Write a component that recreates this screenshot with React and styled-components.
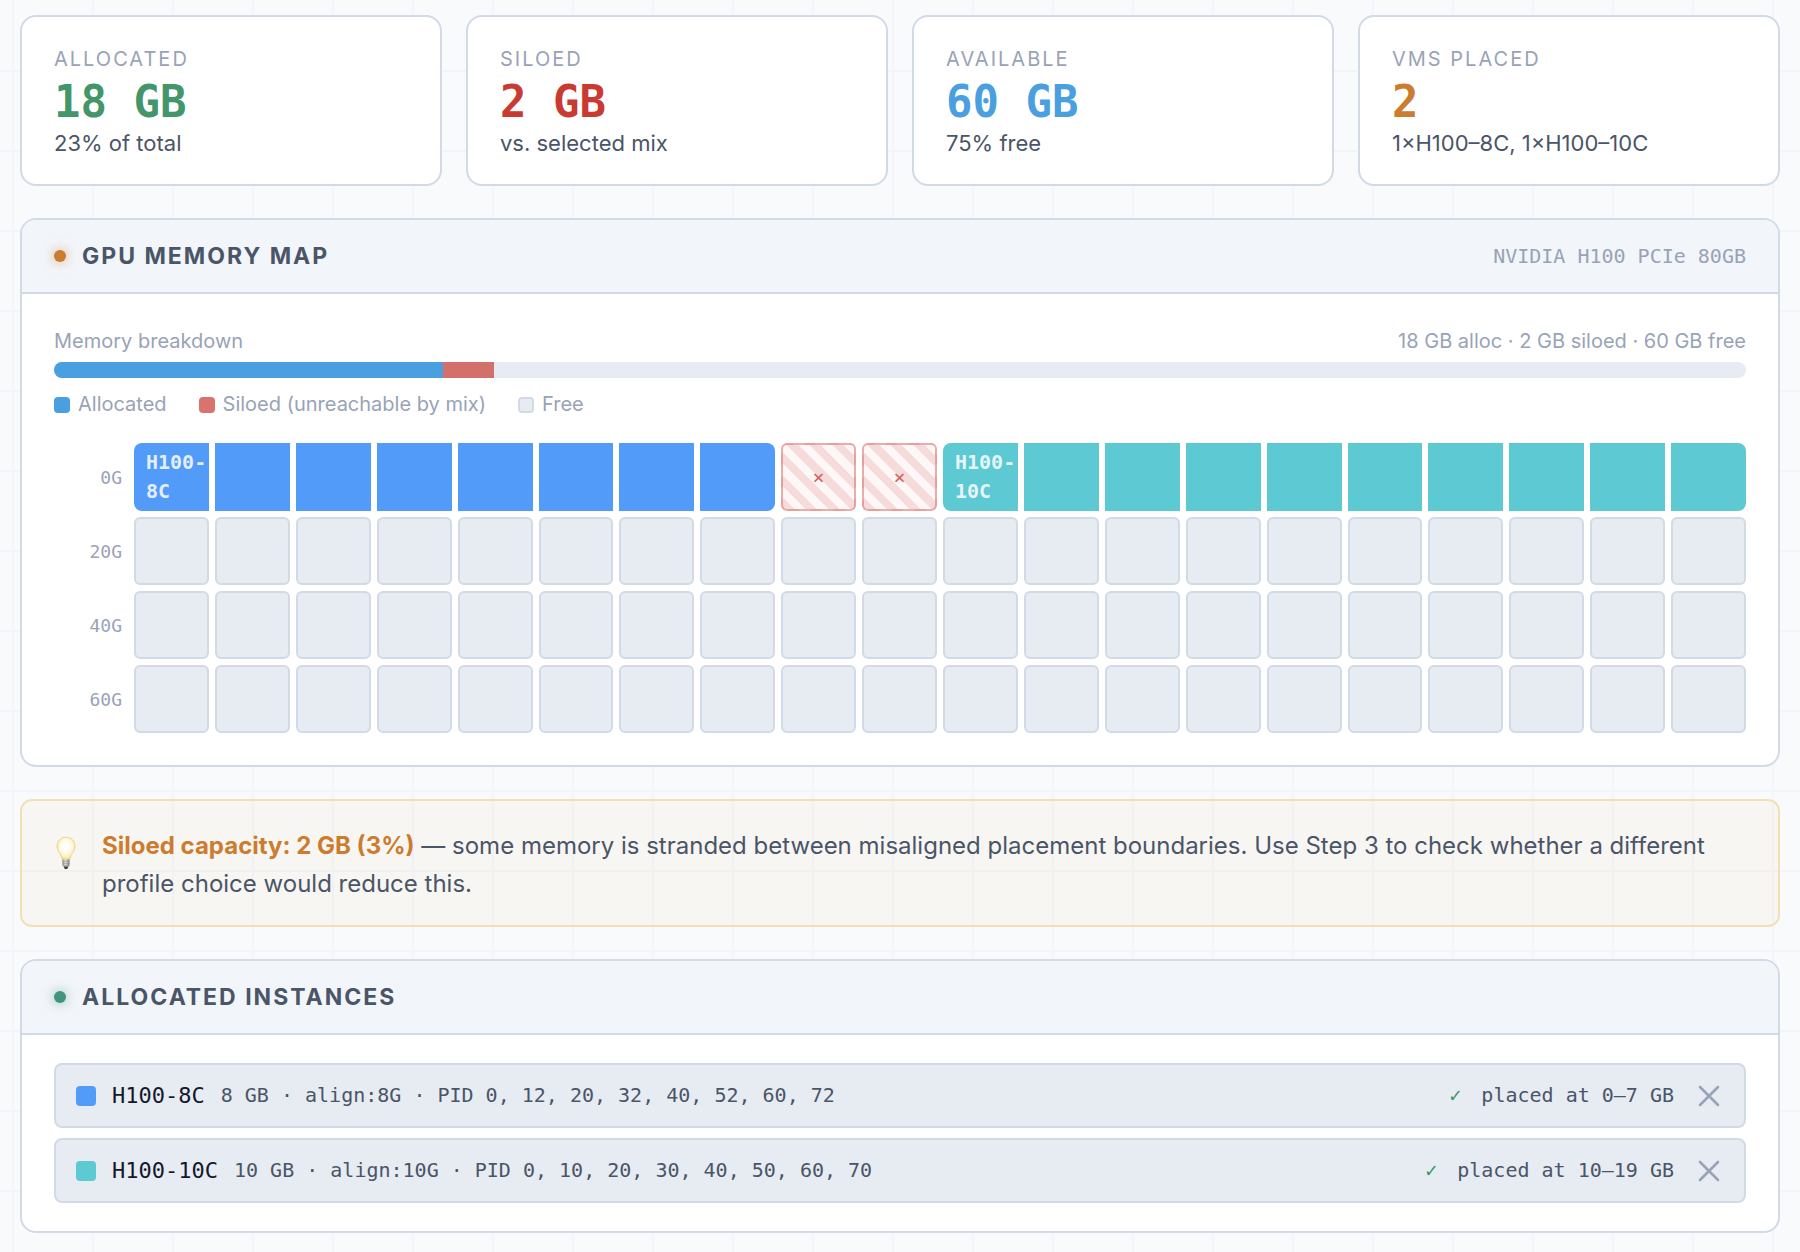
import styled, { createGlobalStyle } from "styled-components"

const sans = `Inter, "Open Sans", "Liberation Sans", sans-serif`
const mono = `"DejaVu Sans Mono", "Liberation Mono", monospace`

const stats = [
    { label: 'Allocated', value: '18 GB', note: '23% of total', color: '#43966a' },
    { label: 'Siloed', value: '2 GB', note: 'vs. selected mix', color: '#c93a32' },
    { label: 'Available', value: '60 GB', note: '75% free', color: '#4a9fe0' },
    { label: 'VMs placed', value: '2', note: '1×H100–8C, 1×H100–10C', color: '#cb7c2e' },
]

const instances = [
    {
        name: 'H100-8C',
        details: '8 GB · align:8G · PID 0, 12, 20, 32, 40, 52, 60, 72',
        placed: 'placed at 0–7 GB',
        color: '#539bf8',
        start: 0,
        size: 8,
    },
    {
        name: 'H100-10C',
        details: '10 GB · align:10G · PID 0, 10, 20, 30, 40, 50, 60, 70',
        placed: 'placed at 10–19 GB',
        color: '#5dc9d3',
        start: 10,
        size: 10,
    },
]

const siloed = [8, 9]
const columns = 20
const rows = [0, 20, 40, 60]
const cellIndexes = Array.from({ length: columns }, (_, i) => i)

const MemoryCell = ({ gb }) => {
    const vm = instances.find((item) => gb >= item.start && gb < item.start + item.size)

    if (vm) {
        const first = gb === vm.start
        const last = gb === vm.start + vm.size - 1
        return (
            <UsedCell $color={vm.color} $first={first} $last={last}>
                {first && <CellName>{vm.name}</CellName>}
            </UsedCell>
        )
    }

    if (siloed.includes(gb)) {
        return <SiloedCell>×</SiloedCell>
    }

    return <FreeCell/>
}

const Bulb = () => (
    <BulbIcon viewBox="0 0 24 34" aria-hidden="true">
        <defs>
            <radialGradient id="glass" cx="50%" cy="42%" r="58%">
                <stop offset="0" stopColor="#ffffff"/>
                <stop offset="0.45" stopColor="#fffdf0"/>
                <stop offset="0.8" stopColor="#fbefb8"/>
                <stop offset="1" stopColor="#ecd37c"/>
            </radialGradient>
            <linearGradient id="metal" x1="0" x2="1" y1="0" y2="0">
                <stop offset="0" stopColor="#8b8986"/>
                <stop offset="0.4" stopColor="#e6e4e2"/>
                <stop offset="1" stopColor="#858380"/>
            </linearGradient>
        </defs>
        <path d="M12 1.2C6.8 1.2 3 5 3 10.2c0 4.2 2.6 6.3 4 9.4.8 1.7 1 3.2 1.4 4.2h7.2c.4-1 .6-2.5 1.400-4.2 1.4-3.100 4-5.200 4-9.400 0-5.200-3.800-9-9-9z" fill="url(#glass)" stroke="#e6cd7d" strokeWidth="0.8"/>
        <path d="M8.4 23.4h7.2v5.4c0 1-1 1.8-2 2.2h-3.2c-1-.4-2-1.2-2-2.2z" fill="url(#metal)"/>
        <path d="M8.4 25.600l7.200-.6M8.400 27.800l7.200-.6M9 29.800l6-.5" stroke="#8f8c88" strokeWidth="0.6"/>
        <path d="M9.6 30.4h4.8L13.2 33h-2.4z" fill="#3b3a39"/>
    </BulbIcon>
)

const App = () => {

    return (
        <Page>
            <GlobalStyle/>
            <StatGrid>
                {stats.map((stat) => (
                    <StatCard key={stat.label}>
                        <StatLabel>{stat.label}</StatLabel>
                        <StatValue $color={stat.color}>{stat.value}</StatValue>
                        <StatNote>{stat.note}</StatNote>
                    </StatCard>
                ))}
            </StatGrid>

            <Panel>
                <PanelHeader>
                    <StatusDot $color="#cb7c2e"/>
                    <PanelTitle>GPU Memory Map</PanelTitle>
                    <PanelMeta>NVIDIA H100 PCIe 80GB</PanelMeta>
                </PanelHeader>
                <MapBody>
                    <BreakdownHead>
                        <span>Memory breakdown</span>
                        <span>18 GB alloc · 2 GB siloed · 60 GB free</span>
                    </BreakdownHead>
                    <Bar>
                        <BarPart $color="#4a9fe0" $width={23}/>
                        <BarPart $color="#d4706b" $width={3}/>
                    </Bar>
                    <Legend>
                        <LegendItem><LegendSwatch $color="#4a9fe0"/>Allocated</LegendItem>
                        <LegendItem><LegendSwatch $color="#d9736e"/>Siloed (unreachable by mix)</LegendItem>
                        <LegendItem><LegendSwatch $color="#e7ecf3" $outlined/>Free</LegendItem>
                    </Legend>
                    <MemoryMap>
                        {rows.map((offset) => (
                            <MemoryRow key={offset}>
                                <RowLabel>{offset}G</RowLabel>
                                <Cells>
                                    {cellIndexes.map((i) => <MemoryCell key={i} gb={offset + i}/>)}
                                </Cells>
                            </MemoryRow>
                        ))}
                    </MemoryMap>
                </MapBody>
            </Panel>

            <Notice>
                <Bulb/>
                <NoticeText>
                    <strong>Siloed capacity: 2 GB (3%)</strong> — some memory is stranded between misaligned placement boundaries. Use Step 3 to check whether a different profile choice would reduce this.
                </NoticeText>
            </Notice>

            <Panel>
                <PanelHeader>
                    <StatusDot $color="#43937f"/>
                    <PanelTitle>Allocated Instances</PanelTitle>
                </PanelHeader>
                <InstanceList>
                    {instances.map((item) => (
                        <InstanceRow key={item.name}>
                            <InstanceSwatch $color={item.color}/>
                            <InstanceName>{item.name}</InstanceName>
                            <InstanceDetails>{item.details}</InstanceDetails>
                            <Placement><Check>✓</Check>{item.placed}</Placement>
                            <RemoveButton type="button" aria-label={`Remove ${item.name}`}>
                                <svg width="22" height="22" viewBox="0 0 22 22" fill="none" stroke="currentColor" strokeWidth="2.6" strokeLinecap="round">
                                    <path d="M2 2l18 18M20 2L2 20"/>
                                </svg>
                            </RemoveButton>
                        </InstanceRow>
                    ))}
                </InstanceList>
            </Panel>
        </Page>
    )

}

export default App


const GlobalStyle = createGlobalStyle`
* {
    box-sizing: border-box;
}

body {
    margin: 0;
    color: #4a5568;
    font-family: ${sans};
    background-color: #f9fafc;
    background-image:
        linear-gradient(#f2f5fb 2px, transparent 2px),
        linear-gradient(90deg, #f2f5fb 2px, transparent 2px);
    background-size: 80px 80px;
    background-position: 12px 70px;
}
`

const Page = styled.main`
display: flex;
flex-direction: column;
gap: 32px;
padding: 15px 20px 18px;
`

const StatGrid = styled.section`
display: grid;
grid-template-columns: repeat(4, 1fr);
gap: 24px;
`

const StatCard = styled.div`
padding: 27px 32px 26px;
background: #fff;
border: 2px solid #d1dae6;
border-radius: 16px;
`

const StatLabel = styled.div`
color: #98a3b8;
font-size: 20px;
line-height: 31px;
letter-spacing: 2px;
text-transform: uppercase;
`

const StatValue = styled.div`
color: ${({ $color }) => $color};
font-family: ${mono};
font-size: 44px;
font-weight: 700;
line-height: 53px;
`

const StatNote = styled.div`
font-size: 22px;
line-height: 30px;
`

const Panel = styled.section`
overflow: hidden;
background: #fff;
border: 2px solid #d1dae6;
border-radius: 16px;
`

const PanelHeader = styled.header`
display: flex;
align-items: center;
gap: 16px;
height: 74px;
padding: 0 32px;
background: #f2f5fa;
border-bottom: 2px solid #d1dae6;
`

const StatusDot = styled.span`
width: 12px;
height: 12px;
border-radius: 50%;
background: ${({ $color }) => $color};
box-shadow: 0 0 12px ${({ $color }) => $color}99;
`

const PanelTitle = styled.h2`
margin: 0;
font-size: 23px;
font-weight: 700;
letter-spacing: 2px;
text-transform: uppercase;
`

const PanelMeta = styled.span`
margin-left: auto;
color: #98a3b8;
font-family: ${mono};
font-size: 20px;
`

const MapBody = styled.div`
padding: 32px;
`

const BreakdownHead = styled.div`
display: flex;
justify-content: space-between;
margin-bottom: 6px;
color: #98a3b8;
font-size: 20px;
line-height: 30px;
`

const Bar = styled.div`
display: flex;
height: 16px;
overflow: hidden;
background: #e7ecf3;
border-radius: 8px;
`

const BarPart = styled.span`
width: ${({ $width }) => $width}%;
background: ${({ $color }) => $color};
`

const Legend = styled.div`
display: flex;
gap: 32px;
margin: 12px 0 24px;
color: #98a3b8;
font-size: 20px;
line-height: 29px;
`

const LegendItem = styled.span`
display: flex;
align-items: center;
gap: 8px;
`

const LegendSwatch = styled.span`
width: 16px;
height: 16px;
background: ${({ $color }) => $color};
border: ${({ $outlined }) => ($outlined ? '2px solid #d1dae6' : 'none')};
border-radius: 4px;
`

const MemoryMap = styled.div`
display: flex;
flex-direction: column;
gap: 6px;
`

const MemoryRow = styled.div`
display: flex;
align-items: center;
gap: 12px;
`

const RowLabel = styled.span`
flex-shrink: 0;
width: 68px;
color: #98a3b8;
font-family: ${mono};
font-size: 18px;
text-align: right;
`

const Cells = styled.div`
display: grid;
grid-template-columns: repeat(${columns}, minmax(0, 1fr));
gap: 6px;
flex-grow: 1;
min-width: 0;
`

const Cell = styled.div`
height: 68px;
overflow: hidden;
`

const FreeCell = styled(Cell)`
background: #e7ecf3;
border: 2px solid #d1dae6;
border-radius: 6px;
`

const UsedCell = styled(Cell)`
display: flex;
align-items: center;
padding-left: 12px;
background: ${({ $color }) => $color};
border-radius: ${({ $first, $last }) => `${$first ? '8px' : 0} ${$last ? '8px 8px' : '0 0'} ${$first ? '8px' : 0}`};
`

const CellName = styled.span`
color: rgba(255, 255, 255, 0.85);
font-family: ${mono};
font-size: 20px;
font-weight: 700;
line-height: 29px;
`

const SiloedCell = styled(Cell)`
display: flex;
align-items: center;
justify-content: center;
color: #d4615c;
font-family: ${mono};
font-size: 20px;
background: repeating-linear-gradient(45deg, #f5dbda 0 8px, #fdf7f7 8px 16px);
border: 2px solid rgba(217, 100, 96, 0.5);
border-radius: 6px;
`

const Notice = styled.aside`
display: flex;
align-items: flex-start;
gap: 24px;
padding: 26px 32px 22px;
background: rgba(236, 180, 60, 0.05);
border: 2px solid #f2dfb6;
border-radius: 12px;
`

const BulbIcon = styled.svg`
flex-shrink: 0;
width: 24px;
height: 34px;
margin-top: 9px;
`

const NoticeText = styled.p`
margin: 0;
font-size: 24px;
line-height: 38px;

strong {
    color: #cb7c2e;
    font-weight: 700;
}
`

const InstanceList = styled.ul`
display: flex;
flex-direction: column;
gap: 10px;
margin: 0;
padding: 28px 32px;
list-style: none;
`

const InstanceRow = styled.li`
display: flex;
align-items: center;
gap: 16px;
padding: 14px 20px;
background: #e7ecf3;
border: 2px solid #d1dae6;
border-radius: 8px;
font-family: ${mono};
font-size: 20px;
line-height: 33px;
`

const InstanceSwatch = styled.span`
width: 20px;
height: 20px;
background: ${({ $color }) => $color};
border-radius: 4px;
`

const InstanceName = styled.span`
color: #14182b;
font-size: 22px;
`

const InstanceDetails = styled.span`
flex-grow: 1;
`

const Placement = styled.span`
display: flex;
gap: 20px;
`

const Check = styled.span`
color: #38965f;
font-weight: 700;
`

const RemoveButton = styled.button`
display: flex;
align-items: center;
justify-content: center;
width: 30px;
height: 32px;
margin-left: 4px;
padding: 0;
color: #98a3b8;
background: none;
border: none;
cursor: pointer;
`
